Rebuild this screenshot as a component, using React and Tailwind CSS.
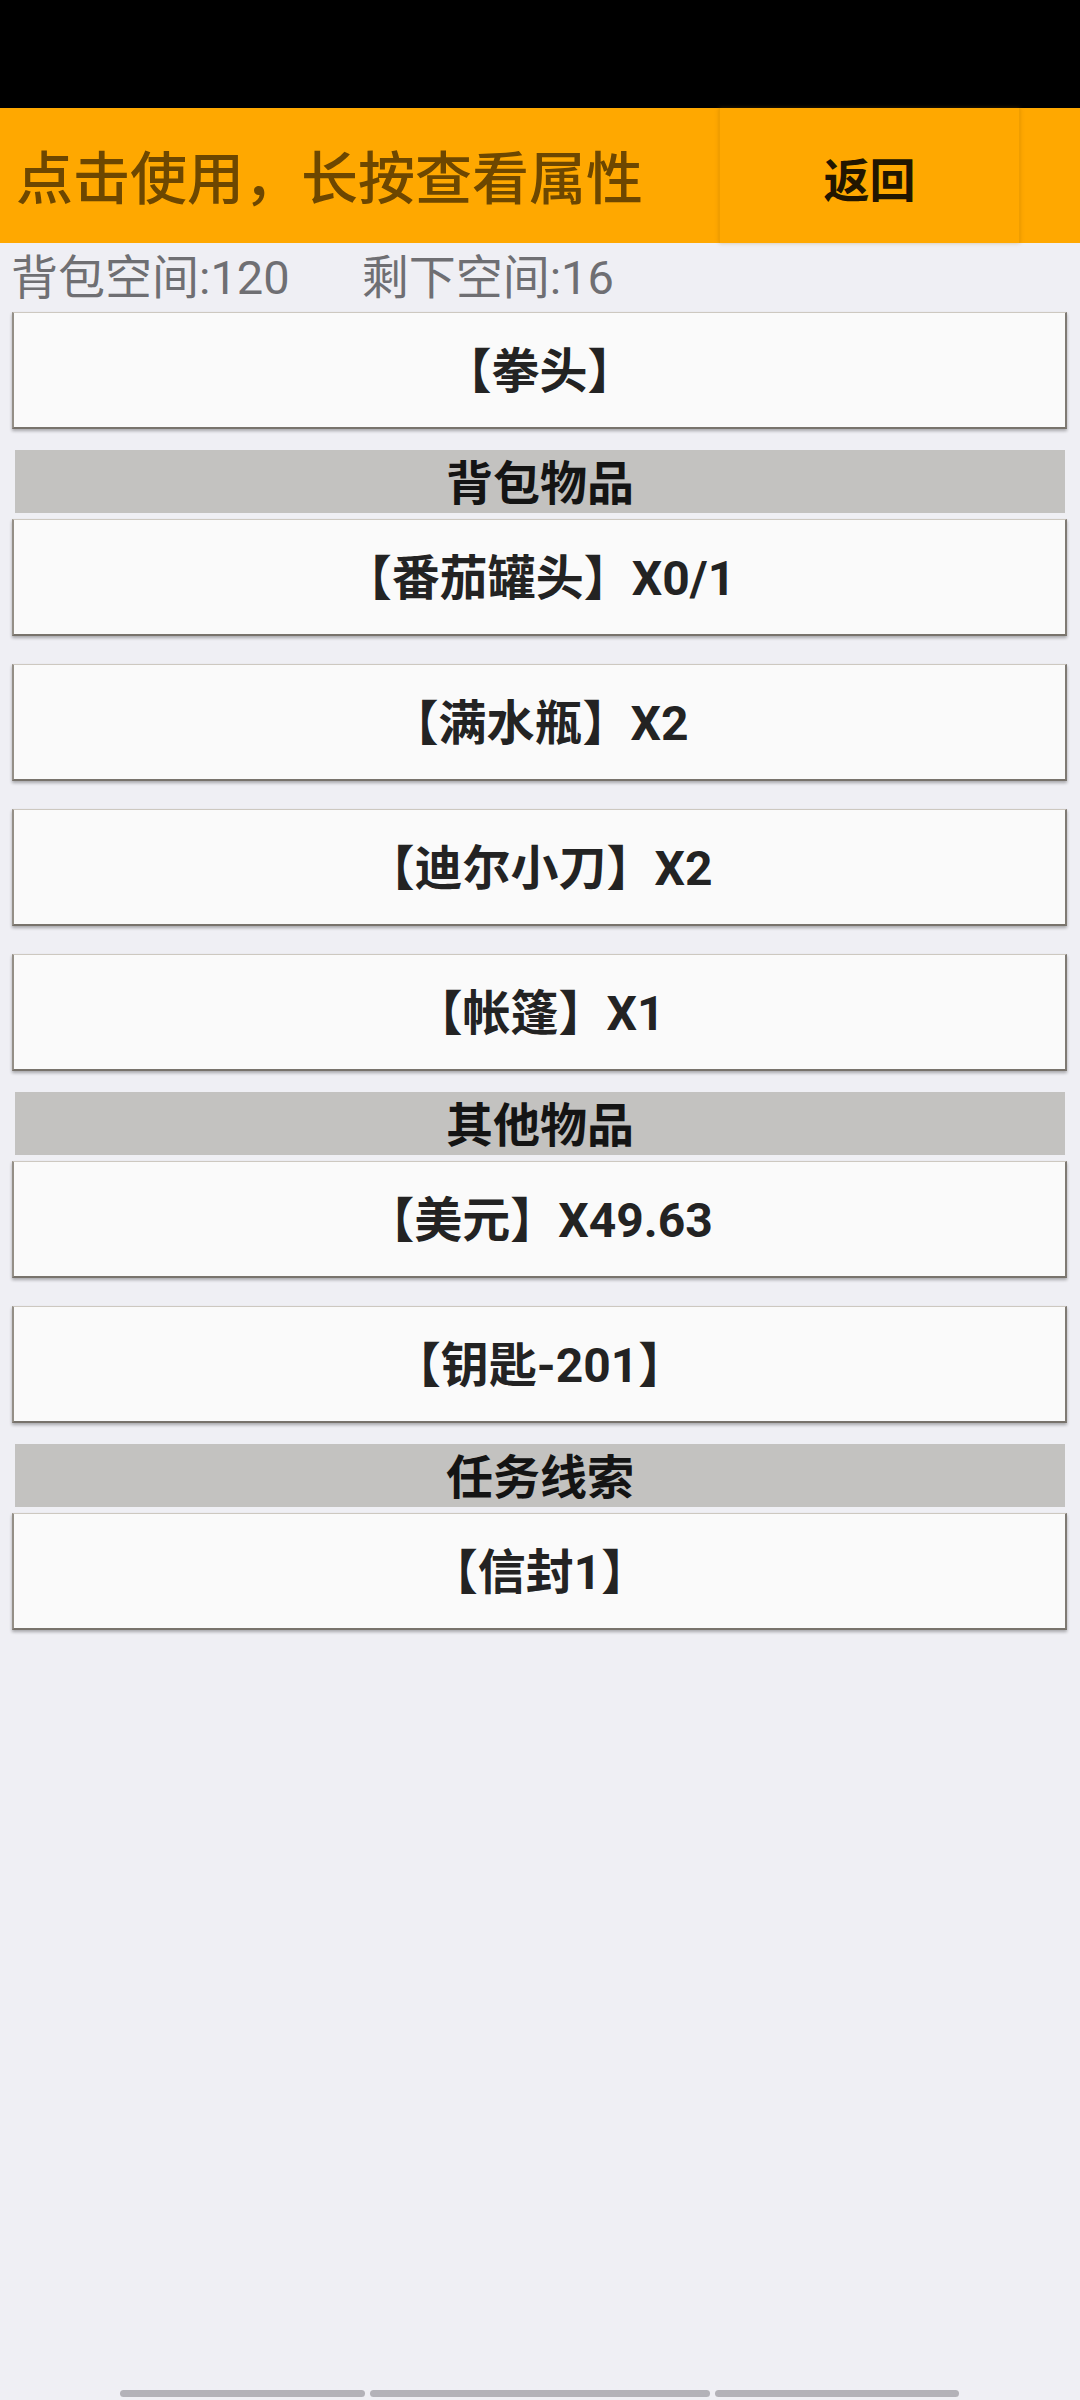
import React from 'react';

const FONT = "font-['Roboto','Noto_Sans_CJK_SC',sans-serif]";

// inventory list, in display order
const rows = [
  { type: 'item', label: '【拳头】' },
  { type: 'head', label: '背包物品' },
  { type: 'item', label: '【番茄罐头】X0/1' },
  { type: 'item', label: '【满水瓶】X2' },
  { type: 'item', label: '【迪尔小刀】X2' },
  { type: 'item', label: '【帐篷】X1' },
  { type: 'head', label: '其他物品' },
  { type: 'item', label: '【美元】X49.63' },
  { type: 'item', label: '【钥匙-201】' },
  { type: 'head', label: '任务线索' },
  { type: 'item', label: '【信封1】' },
];

function ItemButton({ label, gap }) {
  return (
    <div
      className={`${gap} mr-[1px] h-[117px] pt-[4px] flex items-center justify-center bg-[#fafafa] border-t border-t-[#cdc8c0] border-l-2 border-l-[#948f87] border-r-2 border-r-[#7f7a73] border-b-2 border-b-[#78736c] shadow-[0_2px_3px_rgba(0,0,0,0.3)]`}
    >
      <span className="text-[48px] font-bold text-[#232323] leading-none">{label}</span>
    </div>
  );
}

function SectionHead({ label }) {
  return (
    <div className="mt-[21px] mx-[3px] h-[63px] pt-[4px] flex items-center justify-center bg-[#c3c2c0]">
      <span className="text-[47px] font-bold text-[#141414] leading-none">{label}</span>
    </div>
  );
}

export default function App() {
  return (
    <div className={`min-h-[2400px] w-[1080px] flex flex-col bg-[#efeff4] ${FONT}`}>
      {/* status bar */}
      <div className="h-[108px] bg-black" />

      {/* header */}
      <div className="h-[135px] flex bg-[#ffa800]">
        <div className="w-[719px] flex items-center pl-[16px] pt-[8px]">
          <span className="text-[57px] font-medium text-[#6d4700] leading-none">点击使用，长按查看属性</span>
        </div>
        <div className="w-[301px] flex items-center justify-center pt-[10px] border-x border-[#f09e00] shadow-[0_0_4px_rgba(160,100,0,0.35)]">
          <span className="text-[46px] font-bold text-[#221600] leading-none">返回</span>
        </div>
        <div className="flex-1" />
      </div>

      {/* capacity */}
      <div className="h-[69px] flex items-center gap-[72px] pl-[11px] text-[47px] text-[#6f6f73] leading-none">
        <span>背包空间:120</span>
        <span>剩下空间:16</span>
      </div>

      {/* list */}
      <div className="flex flex-col pl-[12px] pr-[12px]">
        {rows.map((r, i) => {
          if (r.type === 'head') return <SectionHead key={i} label={r.label} />;
          const prev = rows[i - 1];
          const gap = !prev ? 'mt-0' : prev.type === 'head' ? 'mt-[6px]' : 'mt-[28px]';
          return <ItemButton key={i} label={r.label} gap={gap} />;
        })}
      </div>

      <div className="flex-1" />

      {/* gesture bar */}
      <div className="flex pl-[120px] gap-[5px] pb-[3px]">
        <div className="w-[245px] h-[7px] rounded-full bg-[#b3b2b8]" />
        <div className="w-[340px] h-[7px] rounded-full bg-[#b3b2b8]" />
        <div className="w-[244px] h-[7px] rounded-full bg-[#b3b2b8]" />
      </div>
    </div>
  );
}
